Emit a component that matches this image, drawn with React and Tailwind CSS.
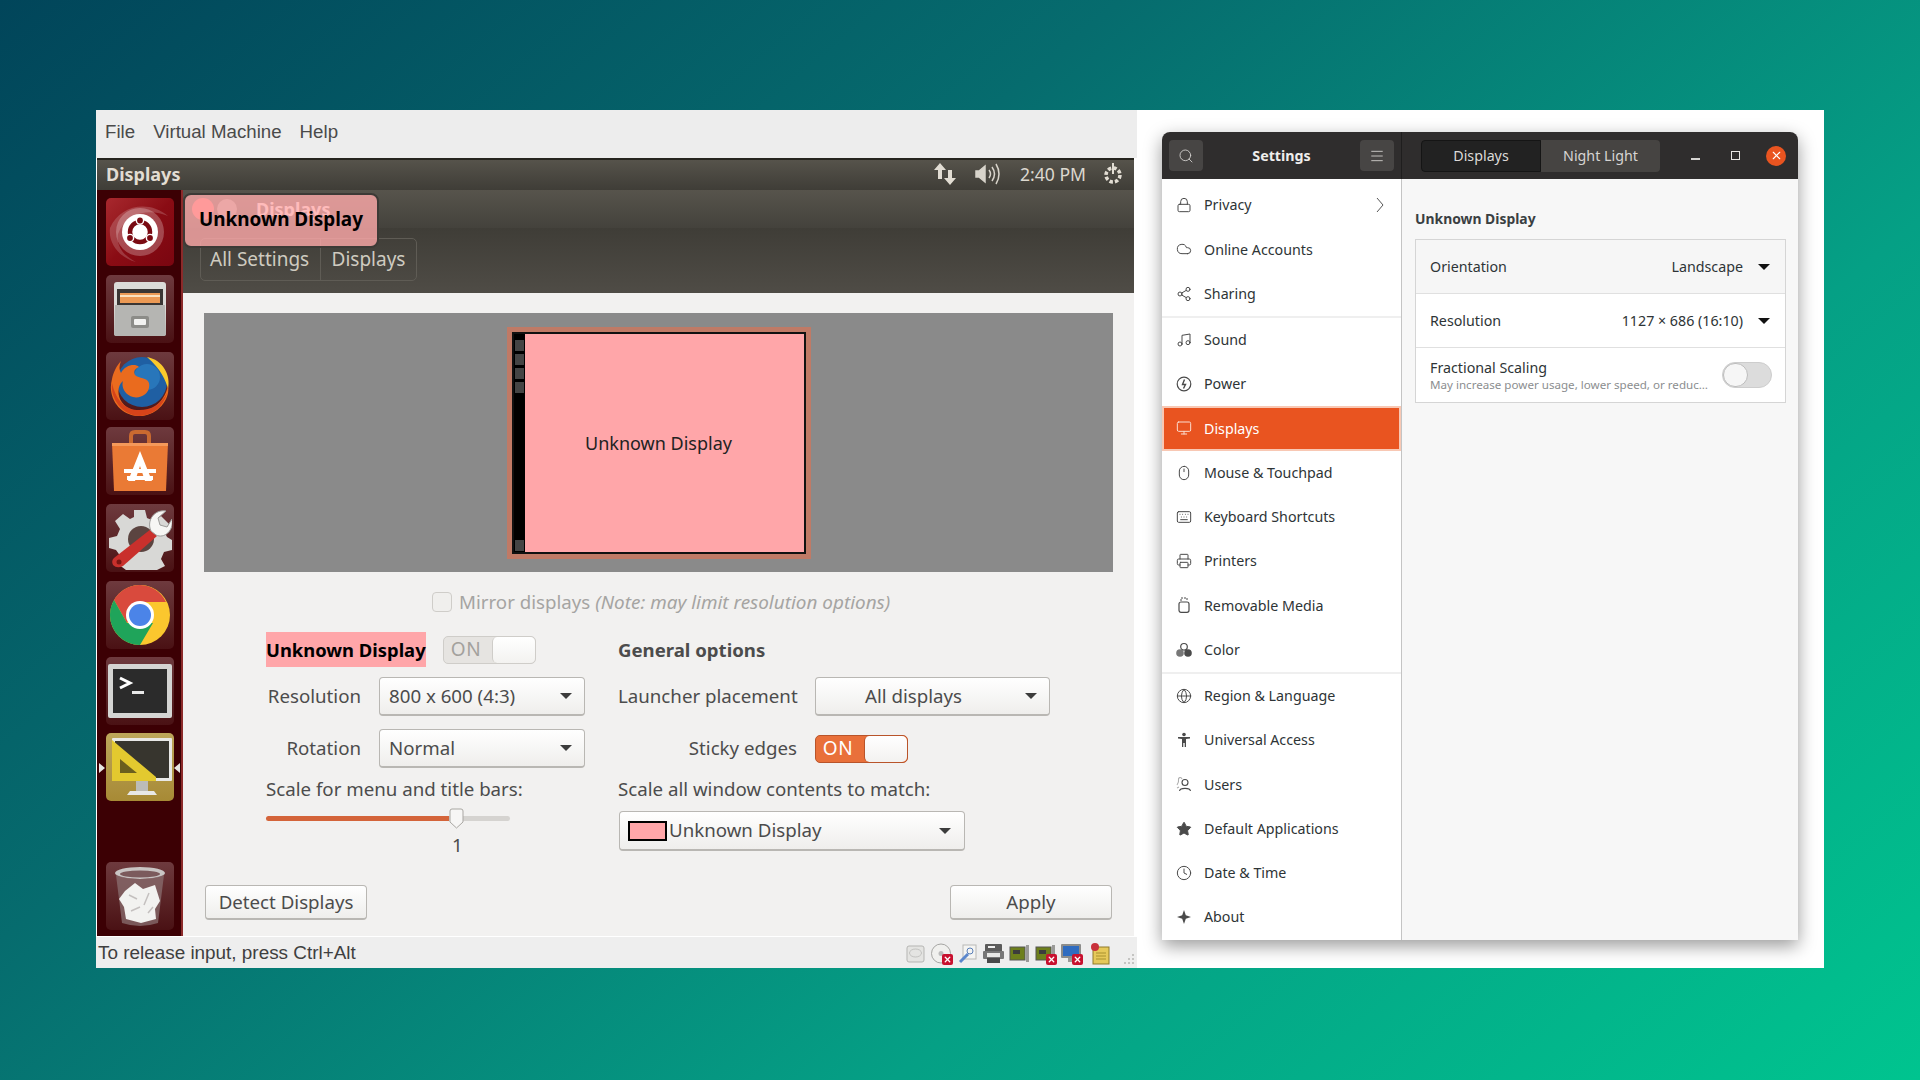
import {
  Search, Menu, Lock, Cloud, Share2, Music, Monitor, Mouse, Keyboard, Printer, Globe, Star, Clock, X,
} from "lucide-react";

const UB = "font-['Noto_Sans','Open_Sans',sans-serif]";

function Caret({ className = "" }) {
  return <span className={`w-0 h-0 border-x-[6px] border-x-transparent border-t-[6px] border-t-[#3c3c3c] ${className}`} />;
}

function Combo({ className = "", children }) {
  return (
    <div className={`h-[39px] flex items-center rounded-[4px] border border-[#b9b7b3] border-b-2 bg-gradient-to-b from-white to-[#efeeec] text-[#4c4c4c] ${className}`}>
      {children}
    </div>
  );
}

function Toggle({ on }) {
  return (
    <div className={`h-[28px] w-[93px] flex rounded-[5px] border ${on ? "border-[#b9542a] bg-[#e9703a] text-white" : "border-[#cfcdc9] bg-[#e6e4e1] text-[#a3a19d]"}`}>
      <span className="w-[48px] pr-[4px] flex items-center justify-center text-[19px] leading-none tracking-[0.5px]">ON</span>
      <span className={`flex-1 rounded-[5px] border-l ${on ? "border-[#b9542a]" : "border-[#cfcdc9]"} bg-gradient-to-b from-white to-[#f3f2f0]`} />
    </div>
  );
}

function Tile({ active, red, className = "", children }) {
  const bg = red
    ? "bg-gradient-to-br from-[#a8282e] via-[#8a0c14] to-[#7a0610]"
    : active
      ? "bg-gradient-to-b from-[#bda65a] to-[#a78a35]"
      : "bg-gradient-to-b from-[#6e3a3e] to-[#4a1114]";
  return <div className={`w-[68px] h-[68px] ml-[9px] rounded-[5px] flex items-center justify-center ${bg} ${className}`}>{children}</div>;
}

const UbuntuIcon = () => (
  <svg width="68" height="68" viewBox="0 0 68 68">
    <path d="M4 30 C14 6 44 2 62 18 C44 10 20 14 12 36 C10 48 18 58 30 64 C14 60 2 46 4 30Z" fill="#fff" opacity="0.18" />
    <circle cx="34" cy="34" r="24" fill="#fff" opacity="0.25" />
    <circle cx="34" cy="34" r="18" fill="#fff" />
    <circle cx="34" cy="34" r="10" fill="none" stroke="#7a0a12" strokeWidth="4.500" />
    <circle cx="34" cy="22.500" r="4.300" fill="#fff" />
    <circle cx="24" cy="40" r="4.300" fill="#fff" />
    <circle cx="44" cy="40" r="4.300" fill="#fff" />
    <circle cx="34" cy="22.500" r="2.900" fill="#7a0a12" />
    <circle cx="24" cy="40" r="2.900" fill="#7a0a12" />
    <circle cx="44" cy="40" r="2.900" fill="#7a0a12" />
  </svg>
);

const FilesIcon = () => (
  <svg width="58" height="58" viewBox="0 0 58 58">
    <rect x="3" y="2" width="52" height="54" rx="3" fill="#dcdbd8" />
    <rect x="6" y="9" width="46" height="17" fill="#3a3634" />
    <rect x="9" y="13" width="40" height="10" fill="#ec9a55" />
    <rect x="9" y="15" width="40" height="2" fill="#fbe2bf" />
    <path d="M4 25 H54 L55 54 Q55 56 53 56 H5 Q3 56 3 54Z" fill="#b5b5b2" />
    <rect x="20" y="36" width="18" height="12" rx="2" fill="#8c8c88" />
    <rect x="23" y="39" width="12" height="6" rx="1" fill="#f2f2f0" />
  </svg>
);

const FirefoxIcon = () => (
  <svg width="62" height="62" viewBox="0 0 62 62">
    <circle cx="33" cy="27" r="25" fill="#1f5fa3" />
    <circle cx="38" cy="22" r="13" fill="#2f86c9" opacity="0.6" />
    <path d="M38 2 C54 5 62 20 59 34 C57 26 52 14 38 2Z" fill="#f9c92c" />
    <path d="M12 6 C10 12 10 14 12 18 C16 10 26 8 30 12 C26 14 24 16 26 20 C30 24 38 22 40 28 C42 38 32 44 24 42 C16 40 12 32 14 26 C6 32 8 50 24 55 C40 60 56 48 59 30 C62 46 46 62 29 61 C10 60 -2 42 3 24 C4 18 8 10 12 6Z" fill="#ea6b1e" />
    <path d="M3 28 C1 44 14 61 31 61 C44 60 54 52 58 38 C52 50 40 56 28 55 C14 54 6 42 3 28Z" fill="#d6431a" />
  </svg>
);

const StoreIcon = () => (
  <svg width="60" height="64" viewBox="0 0 60 64">
    <path d="M21 14 V7 Q21 3 25 3 H35 Q39 3 39 7 V14" fill="none" stroke="#c96a30" strokeWidth="4" />
    <path d="M2 14 H58 L56 62 H4Z" fill="#ea7a35" />
    <rect x="2" y="14" width="56" height="3" fill="#f4995a" />
    <path d="M30 22 L42 52 H35 L30 37 L25 52 H18Z" fill="#fff" />
    <rect x="14" y="40" width="32" height="4" fill="#fff" />
    <rect x="17" y="47" width="26" height="4" fill="#fff" />
  </svg>
);

const ToolsIcon = () => (
  <svg width="64" height="64" viewBox="0 0 64 64">
    <path d="M26 4 H37 L39 12 L46 15 L53 10 L61 18 L56 25 L59 31 L64 34 V44 L56 46 L53 53 L57 60 L49 64 H18 L10 58 L13 51 L8 44 L1 42 V32 L9 30 L12 23 L7 15 L15 8 L22 13 L26 11Z" fill="#d8d8d6" />
    <circle cx="33" cy="33" r="13" fill="#5b4440" />
    <path d="M6 52 L43 23 L49 30 L15 60 Q9 63 5 59 Q3 55 6 52Z" fill="#c9302c" />
    <circle cx="11" cy="56" r="2.500" fill="#7b1512" />
    <path d="M43 25 C38 14 47 3 58 5 L50 12 L52 19 L59 21 L64 13 C66 25 56 33 48 29Z" fill="#f6f6f4" stroke="#9c9c9a" strokeWidth="1" />
  </svg>
);

const ChromeIcon = () => (
  <svg width="60" height="60" viewBox="0 0 60 60">
    <circle cx="30" cy="30" r="30" fill="#fbc72e" />
    <path d="M30 0 A30 30 0 0 0 4 15 L17 38 L30 17 H56 A30 30 0 0 0 30 0Z" fill="#d94a3d" />
    <path d="M4 15 A30 30 0 0 0 30 60 L43 38 L17 38Z" fill="#1fa45a" />
    <circle cx="30" cy="30" r="14" fill="#fff" />
    <circle cx="30" cy="30" r="11" fill="#4b84e8" />
  </svg>
);

const TermIcon = () => (
  <svg width="64" height="54" viewBox="0 0 64 54">
    <rect x="0" y="0" width="64" height="54" rx="2" fill="#d5d5d3" />
    <rect x="5" y="5" width="54" height="44" fill="#2b2b2b" />
    <path d="M12 14 L22 19 L12 24" fill="none" stroke="#fff" strokeWidth="3" />
    <rect x="24" y="27" width="12" height="3" fill="#e8e8e8" />
  </svg>
);

const DisplayIcon = () => (
  <svg width="66" height="64" viewBox="0 0 66 64">
    <rect x="5" y="3" width="60" height="43" rx="1" fill="#e8e8e6" />
    <rect x="8" y="6" width="54" height="37" fill="#37352e" />
    <path d="M23 56 H47 L50 60 H20Z" fill="#e8e8e6" />
    <rect x="29" y="46" width="12" height="10" fill="#bcbcb8" />
    <path d="M5 5 L49 42 V46 H5Z" fill="#e3c92f" />
    <path d="M13 24 L30 38 H13Z" fill="#6b5f1e" />
  </svg>
);

const TrashIcon = () => (
  <svg width="54" height="62" viewBox="0 0 54 62">
    <ellipse cx="27" cy="8" rx="25" ry="6" fill="#c9c5c4" />
    <ellipse cx="27" cy="9" rx="20" ry="3.500" fill="#7b5a5c" />
    <path d="M3 10 L9 58 Q27 64 45 58 L51 10 Q27 18 3 10Z" fill="#8a6f70" opacity="0.75" />
    <path d="M12 26 L22 18 L30 24 L42 20 L47 36 L42 44 L43 54 L28 58 L13 54 L11 42 L6 34Z" fill="#f2f2f0" />
    <path d="M16 30 L24 34 M36 28 L31 40 M18 46 L27 42 M35 48 L40 42" stroke="#c4c0bf" strokeWidth="1.500" />
  </svg>
);

function StatusIcons() {
  const Badge = () => (
    <span className="absolute -right-[1px] -bottom-[1px] w-[11px] h-[11px] rounded-[2px] bg-[#c8102e] flex items-center justify-center">
      <X size={9} color="#fff" strokeWidth={3.5} />
    </span>
  );
  const Card = ({ bad }) => (
    <span className="relative block w-[21px] h-[21px]">
      <svg width="21" height="21" viewBox="0 0 21 21">
        <rect x="1" y="4" width="15" height="13" fill="#6d7f1c" stroke="#555" />
        <rect x="4" y="7" width="7" height="4" fill="#3c3c3c" />
        <rect x="17" y="2" width="3" height="17" fill="#9a9a98" />
      </svg>
      {bad && <Badge />}
    </span>
  );
  return (
    <div className="flex items-center ml-auto mr-[27px]">
      <svg width="19" height="20" viewBox="0 0 19 20"><rect x="1" y="2" width="17" height="16" rx="2" fill="#e4e4e2" stroke="#b5b5b3" /><ellipse cx="9.500" cy="9" rx="6" ry="4" fill="none" stroke="#c2c2c0" /></svg>
      <span className="relative block w-[21px] h-[21px] ml-[6px]">
        <svg width="21" height="21" viewBox="0 0 21 21"><circle cx="10" cy="10.500" r="9.500" fill="#f0f0ee" stroke="#a5a5a3" /><circle cx="10" cy="10.500" r="2.500" fill="#bbb" /></svg>
        <Badge />
      </span>
      <svg className="ml-[6px]" width="19" height="20" viewBox="0 0 19 20"><rect x="5" y="1" width="13" height="14" fill="#f4f4f2" stroke="#b8b8b6" /><circle cx="12" cy="7" r="3" fill="none" stroke="#5a7fb8" /><path d="M2 18 L10 10" stroke="#5a86cc" strokeWidth="3" /></svg>
      <svg className="ml-[6px]" width="21" height="21" viewBox="0 0 21 21"><rect x="2" y="1" width="17" height="8" rx="1" fill="#5b5b5b" /><rect x="5" y="3" width="7" height="2" fill="#eee" /><rect x="0" y="8" width="21" height="8" rx="1" fill="#777" /><rect x="4" y="10" width="13" height="4" fill="#e8e8e6" /><rect x="4" y="15" width="13" height="5" fill="#4a4a4a" /></svg>
      <span className="ml-[5px]"><Card /></span>
      <span className="ml-[5px]"><Card bad /></span>
      <span className="relative block w-[21px] h-[21px] ml-[5px]">
        <svg width="21" height="21" viewBox="0 0 21 21"><rect x="0" y="1" width="20" height="14" rx="1" fill="#8d8d8b" /><rect x="2" y="3" width="16" height="10" fill="#2f6cc0" /><rect x="7" y="15" width="6" height="4" fill="#9a9a98" /></svg>
        <Badge />
      </span>
      <svg className="ml-[8px]" width="20" height="22" viewBox="0 0 20 22"><rect x="3" y="4" width="16" height="17" fill="#e6c95a" stroke="#8f7a2a" /><path d="M6 10 H16 M6 13 H16 M6 16 H16" stroke="#a8912f" /><circle cx="5" cy="4" r="4" fill="#c8303a" /></svg>
    </div>
  );
}

function VmWindow() {
  return (
    <div className="w-[1041px] h-[858px] flex flex-col font-['Liberation_Sans',sans-serif]">
      <div className="h-[48px] pb-[4px] bg-[#ededed] flex items-center pl-[9px] gap-[18px] text-[18.7px] text-[#4a4a4a] shrink-0">
        <span>File</span>
        <span>Virtual Machine</span>
        <span>Help</span>
      </div>
      <div className={`w-[1037px] ml-[1px] h-[779px] flex flex-col ${UB}`}>
        <div className="h-[32px] border-t-2 pb-[2px] border-[#26251f] bg-gradient-to-b from-[#56534b] to-[#3f3d37] flex items-center pl-[9px] pr-[9px] shrink-0">
          <span className="text-[#e2ddd3] text-[18px] font-bold">Displays</span>
          <svg className="ml-auto" width="22" height="24" viewBox="0 0 22 24" fill="#e2ddd3">
            <path d="M6 1 L12 8 H8 V17 H4 V8 H0Z" /><path d="M16 23 L10 16 H14 V8 H18 V16 H22Z" />
          </svg>
          <svg className="ml-[19px]" width="26" height="22" viewBox="0 0 26 22" fill="none" stroke="#d8d4cb" strokeWidth="1.500">
            <path d="M1 8 H4 L10 3 V19 L4 14 H1Z" fill="#d8d4cb" /><path d="M14 7 Q17 11 14 15" /><path d="M17 4 Q22 11 17 18" /><path d="M21 1 Q27 11 21 21" />
          </svg>
          <span className="ml-[19px] text-[#dcd8cf] text-[17.6px]">2:40 PM</span>
          <svg className="ml-[15px]" width="24" height="24" viewBox="0 0 24 24" fill="none" stroke="#e2ddd3" strokeWidth="3.500">
            <circle cx="12" cy="13" r="7" strokeDasharray="3.500 2" /><path d="M12 1 V12" strokeWidth="2" />
          </svg>
        </div>
        <div className="flex-1 flex min-h-0">
          <div className="w-[86px] shrink-0 bg-[#3c0004] border-r-2 border-[#8c2a2a] flex flex-col pt-[8px]">
            <Tile red><UbuntuIcon /></Tile>
            <Tile className="mt-[9px]"><FilesIcon /></Tile>
            <Tile className="mt-[9px]"><FirefoxIcon /></Tile>
            <Tile className="mt-[7px]"><StoreIcon /></Tile>
            <Tile className="mt-[9px]"><ToolsIcon /></Tile>
            <Tile className="mt-[9px]"><ChromeIcon /></Tile>
            <Tile className="mt-[8px]"><TermIcon /></Tile>
            <div className="relative mt-[8px]">
              <Tile active><DisplayIcon /></Tile>
              <span className="absolute left-[2px] top-[30px] w-0 h-0 border-y-[5px] border-y-transparent border-l-[6px] border-l-[#e8e6e2]" />
              <span className="absolute right-[1px] top-[30px] w-0 h-0 border-y-[5px] border-y-transparent border-r-[6px] border-r-[#e8e6e2]" />
            </div>
            <Tile className="mt-[61px]"><TrashIcon /></Tile>
          </div>
          <div className="flex-1 flex flex-col min-w-0">
            <div className="relative h-[103px] shrink-0 flex flex-col">
              <div className="h-[38px] bg-gradient-to-b from-[#57544c] to-[#44423c] flex items-center pl-[9px]">
                <span className="w-[22px] h-[22px] rounded-full bg-[#ff5a5a]" />
                <span className="ml-[3px] w-[20px] h-[20px] rounded-full bg-[#a09c94]" />
                <span className="ml-[19px] text-white text-[18px] font-bold">Displays</span>
              </div>
              <div className="flex-1 bg-gradient-to-b from-[#3f3d37] to-[#4f4c46] pl-[17px] pt-[10px]">
                <div className="inline-flex h-[43px] rounded-[5px] border border-[#5f5c55] text-[#cfcbc0] text-[19px]">
                  <span className="w-[120px] pl-[9px] flex items-center border-r border-[#5f5c55]">All Settings</span>
                  <span className="w-[95px] flex items-center justify-center">Displays</span>
                </div>
              </div>
              <div className="absolute left-0 top-[3px] w-[196px] h-[55px] pb-[2px] rounded-[8px] border-2 border-[#3d3a36] bg-[#ffaaaa]/80 flex items-center justify-center text-[18.9px] font-bold text-black">
                Unknown Display
              </div>
            </div>
            <div className="flex-1 bg-[#f2f1f0] flex flex-col pt-[20px] min-h-0 text-[18.7px] text-[#4c4c4c]">
              <div className="mx-[21px] h-[259px] bg-[#8a8a8a] flex items-center shrink-0">
                <div className="ml-[303px] w-[304px] h-[232px] bg-[#c07a66] p-[5px] flex">
                  <div className="flex-1 border-2 border-[#111] flex">
                    <div className="w-[11px] bg-black flex flex-col pt-[6px] gap-[3px] shrink-0 pl-[1px]">
                      <span className="w-[9px] h-[11px] bg-[#444]" />
                      <span className="w-[9px] h-[11px] bg-[#444]" />
                      <span className="w-[9px] h-[11px] bg-[#444]" />
                      <span className="w-[9px] h-[11px] bg-[#444]" />
                      <span className="w-[9px] h-[11px] bg-[#444] mt-auto mb-[1px]" />
                    </div>
                    <div className="flex-1 bg-[#ffa6a9] flex items-center justify-center pr-[12px] pt-[2px] text-[18px] text-[#222]">Unknown Display</div>
                  </div>
                </div>
              </div>
              <div className="ml-[249px] mt-[20px] h-[20px] flex items-center text-[#a5a4a2]">
                <span className="w-[20px] h-[20px] rounded-[4px] border border-[#cfcdc9] bg-[#f0efed]" />
                <span className="ml-[7px]">Mirror displays</span>
                <span className="ml-[5px] italic text-[18.9px]">(Note: may limit resolution options)</span>
              </div>
              <div className="ml-[83px] mt-[20px] flex">
                <div className="w-[352px] shrink-0">
                  <div className="h-[35px] flex items-center">
                    <span className="h-[35px] w-[160px] pt-[1px] bg-[#ffa6a9] flex items-center text-black font-bold text-[18.4px] whitespace-nowrap">Unknown Display</span>
                    <span className="ml-[17px]"><Toggle /></span>
                  </div>
                  <div className="mt-[10px] flex items-center gap-[18px]">
                    <span className="w-[95px] text-right whitespace-nowrap">Resolution</span>
                    <Combo className="w-[206px] pl-[9px] pr-[12px] justify-between">800 x 600 (4:3)<Caret /></Combo>
                  </div>
                  <div className="mt-[13px] flex items-center gap-[18px]">
                    <span className="w-[95px] text-right">Rotation</span>
                    <Combo className="w-[206px] pl-[9px] pr-[12px] justify-between">Normal<Caret /></Combo>
                  </div>
                  <div className="mt-[9px] h-[24px] flex items-center whitespace-nowrap">Scale for menu and title bars:</div>
                  <div className="relative mt-[7px] w-[244px] h-[21px] flex items-center">
                    <span className="w-[183px] h-[5px] rounded-l-full bg-[#d4643a]" />
                    <span className="flex-1 h-[5px] rounded-r-full bg-[#d5d3d0]" />
                    <svg className="absolute left-[183px] top-0" width="15" height="21" viewBox="0 0 15 21">
                      <path d="M1 3 Q1 1 3 1 H12 Q14 1 14 3 V14 L7.500 20 L1 14Z" fill="#f7f6f5" stroke="#a9a7a3" />
                    </svg>
                  </div>
                  <div className="w-[380px] pl-[186px] h-[24px] mt-[4px] flex items-center">1</div>
                </div>
                <div className="flex-1 min-w-0">
                  <div className="h-[35px] pt-[1px] flex items-center font-bold text-[18.6px]">General options</div>
                  <div className="mt-[10px] flex items-center gap-[18px]">
                    <span className="w-[179px] text-right whitespace-nowrap">Launcher placement</span>
                    <Combo className="w-[235px] pr-[12px]">
                      <span className="flex-1 text-center pr-[14px]">All displays</span><Caret />
                    </Combo>
                  </div>
                  <div className="mt-[13px] flex items-center gap-[18px] h-[39px]">
                    <span className="w-[179px] text-right">Sticky edges</span>
                    <Toggle on />
                  </div>
                  <div className="mt-[9px] h-[24px] flex items-center whitespace-nowrap">Scale all window contents to match:</div>
                  <Combo className="mt-[10px] ml-[1px] w-[346px] h-[40px] pl-[8px] pr-[13px]">
                    <span className="w-[39px] h-[20px] bg-[#ffa6a9] border-2 border-black shrink-0" />
                    <span className="ml-[2px] flex-1">Unknown Display</span>
                    <Caret />
                  </Combo>
                </div>
              </div>
              <div className="mt-auto mb-[16px] mx-[22px] flex justify-between">
                <button className="w-[162px] h-[35px] rounded-[4px] border border-[#b9b7b3] border-b-2 bg-gradient-to-b from-white to-[#efeeec]">Detect Displays</button>
                <button className="w-[162px] h-[35px] rounded-[4px] border border-[#b9b7b3] border-b-2 bg-gradient-to-b from-white to-[#efeeec]">Apply</button>
              </div>
            </div>
          </div>
        </div>
      </div>
      <div className="h-[31px] mt-[1px] pt-[2px] bg-[#eeeeee] flex items-center pl-[2px] text-[18.9px] text-[#3f3f3f] relative shrink-0">
        To release input, press Ctrl+Alt
        <StatusIcons />
        <svg className="absolute right-[2px] bottom-[2px]" width="14" height="14" viewBox="0 0 14 14" fill="#c4c4c2">
          <rect x="11" y="2" width="2" height="2" /><rect x="11" y="6" width="2" height="2" /><rect x="7" y="6" width="2" height="2" /><rect x="11" y="10" width="2" height="2" /><rect x="7" y="10" width="2" height="2" /><rect x="3" y="10" width="2" height="2" />
        </svg>
      </div>
    </div>
  );
}

const PowerIcon = (p) => (
  <svg viewBox="0 0 16 16" width="16" height="16" className={p.className} fill="none" stroke="currentColor" strokeWidth="1.200">
    <circle cx="8" cy="8" r="6.800" /><path d="M8.500 3.500 L6.500 8.500 H9.500 L7.500 12.500" strokeWidth="1.400" />
  </svg>
);
const UsbIcon = (p) => (
  <svg viewBox="0 0 16 16" width="16" height="16" className={p.className} fill="none" stroke="currentColor" strokeWidth="1.200">
    <rect x="3" y="5" width="10" height="10.300" rx="2" /><path d="M5 4 V1 H11 V4" strokeWidth="1" strokeDasharray="2 1" />
  </svg>
);
const ColorIcon = (p) => (
  <svg viewBox="0 0 16 16" width="16" height="16" className={p.className} fill="currentColor">
    <circle cx="8" cy="4.800" r="3.300" fill="none" stroke="currentColor" strokeWidth="1.200" /><circle cx="4" cy="11" r="3.800" opacity="0.75" /><circle cx="12" cy="11" r="3.800" />
  </svg>
);
const AccessIcon = (p) => (
  <svg viewBox="0 0 16 16" width="16" height="16" className={p.className} fill="currentColor">
    <circle cx="8" cy="2.500" r="1.800" /><path d="M2 5 H14 V6.500 L10 7 V15 H8.700 V11 H7.300 V15 H6 V7 L2 6.500Z" />
  </svg>
);
const UsersIcon = (p) => (
  <svg viewBox="0 0 16 16" width="16" height="16" className={p.className} fill="none" stroke="currentColor" strokeWidth="1.100">
    <circle cx="9" cy="6.500" r="3" /><path d="M3.500 15 C4 11.500 14 11.500 14.500 15" /><path d="M6 3 C5 0.500 2 1.500 2.500 4 C3 6 2.500 7 1 9 M1 12 L3 11" opacity="0.45" />
  </svg>
);
const AboutIcon = (p) => (
  <svg viewBox="0 0 16 16" width="16" height="16" className={p.className} fill="currentColor"><path d="M8 1 L9.800 6.200 L15 8 L9.800 9.800 L8 15 L6.200 9.800 L1 8 L6.200 6.200Z" /></svg>
);

const GROUPS = [
  [
    { name: "Privacy", icon: Lock, arrow: true },
    { name: "Online Accounts", icon: Cloud },
    { name: "Sharing", icon: Share2 },
  ],
  [
    { name: "Sound", icon: Music },
    { name: "Power", icon: PowerIcon },
    { name: "Displays", icon: Monitor, active: true },
    { name: "Mouse & Touchpad", icon: Mouse },
    { name: "Keyboard Shortcuts", icon: Keyboard },
    { name: "Printers", icon: Printer },
    { name: "Removable Media", icon: UsbIcon },
    { name: "Color", icon: ColorIcon },
  ],
  [
    { name: "Region & Language", icon: Globe },
    { name: "Universal Access", icon: AccessIcon },
    { name: "Users", icon: UsersIcon },
    { name: "Default Applications", icon: Star, filled: true },
    { name: "Date & Time", icon: Clock },
    { name: "About", icon: AboutIcon },
  ],
];

function SidebarRow({ item }) {
  const Icon = item.icon;
  return (
    <div className={`h-[44.25px] flex items-center pr-[14px] ${item.active ? "pl-[12px] bg-[#e95420] text-white border-2 border-[#f8c8b4]" : "pl-[14px] text-[#2e3436]"}`}>
      <Icon
        size={16}
        strokeWidth={1.5}
        fill={item.filled ? "currentColor" : "none"}
        className={item.active ? "text-[#fbdccf]" : "text-[#4a4a4a]"}
      />
      <span className="ml-[12px]">{item.name}</span>
      {item.arrow && (
        <svg className="ml-auto mr-[3px]" width="8" height="16" viewBox="0 0 8 16" fill="none" stroke="#555" strokeWidth="1">
          <path d="M1 1 L7 8 L1 15" />
        </svg>
      )}
    </div>
  );
}

function SettingsWindow() {
  return (
    <div className={`ml-[25px] mt-[22px] w-[636px] h-[808px] rounded-t-[8px] flex flex-col overflow-hidden shadow-[0_6px_18px_rgba(0,0,0,0.4)] text-[14.25px] ${UB}`}>
      <div className="h-[47px] bg-[#2f2d2d] flex shrink-0 items-center text-white">
        <div className="w-[240px] h-full flex items-center px-[7px] border-r border-[#1f1e1e]">
          <span className="w-[34px] h-[31px] rounded-[4px] bg-[#474544] flex items-center justify-center"><Search size={16} strokeWidth={1.300} color="#d6d4d2" /></span>
          <span className="flex-1 text-center font-bold text-[#efeeec]">Settings</span>
          <span className="w-[34px] h-[31px] rounded-[4px] bg-[#474544] flex items-center justify-center"><Menu size={16} strokeWidth={1.300} color="#d6d4d2" /></span>
        </div>
        <div className="ml-[19px] flex h-[32px]">
          <span className="w-[120px] rounded-l-[4px] border border-[#151515] bg-[#222222] flex items-center justify-center text-[#dcdad8]">Displays</span>
          <span className="w-[119px] rounded-r-[4px] bg-[#464442] flex items-center justify-center text-[#d6d4d2]">Night Light</span>
        </div>
        <span className="ml-[31px] w-[9px] h-[2px] mt-[7px] bg-[#d6d4d2]" />
        <span className="ml-[31px] w-[9px] h-[9px] border border-[#e8e6e4]" />
        <span className="ml-[26px] w-[20px] h-[20px] rounded-full bg-[#e95420] flex items-center justify-center"><X size={13} strokeWidth={2} color="#fff" /></span>
      </div>
      <div className="flex-1 flex min-h-0">
        <div className="w-[240px] bg-white border-r border-[#c4c4c4] shrink-0 pt-[4px]">
          {GROUPS.map((g, i) => (
            <div key={i} className={i < 2 ? "border-b-2 border-[#efefef]" : ""}>
              {g.map((it) => <SidebarRow key={it.name} item={it} />)}
            </div>
          ))}
        </div>
        <div className="flex-1 bg-[#f7f7f7] pl-[13px] pr-[12px] pt-[29px] text-[#2e3436]">
          <div className="h-[22px] flex items-center font-bold text-[13.9px] text-[#3a3f42]">Unknown Display</div>
          <div className="mt-[9px] border border-[#d5d5d5] flex flex-col h-[164px]">
            <div className="h-[54px] flex items-center px-[14px] bg-[#f6f6f6] border-b border-[#e0e0e0]">
              Orientation
              <span className="ml-auto">Landscape</span>
              <Caret className="ml-[15px] mr-[1px] border-x-[5px] border-t-[5px] border-t-[#111]" />
            </div>
            <div className="h-[54px] flex items-center px-[14px] bg-white border-b border-[#e0e0e0]">
              Resolution
              <span className="ml-auto">1127 × 686 (16:10)</span>
              <Caret className="ml-[15px] mr-[1px] border-x-[5px] border-t-[5px] border-t-[#111]" />
            </div>
            <div className="flex-1 flex items-center pl-[14px] pr-[13px] bg-white">
              <div className="flex flex-col">
                <span className="leading-[20px]">Fractional Scaling</span>
                <span className="text-[11.6px] leading-[14px] text-[#8b8e8f] whitespace-nowrap">May increase power usage, lower speed, or reduc…</span>
              </div>
              <span className="ml-auto w-[50px] h-[26px] rounded-full bg-[#dcdcdc] border border-[#cdcdcd] flex">
                <span className="w-[25px] h-[24px] rounded-full bg-[#f6f6f6] border border-[#bdbdbd]" />
              </span>
            </div>
          </div>
        </div>
      </div>
    </div>
  );
}

export default function App() {
  return (
    <div className="w-[1920px] h-[1080px] overflow-hidden pt-[110px] pl-[96px] bg-[linear-gradient(140deg,#01455a_0%,#066c6e_35%,#05a085_68%,#00c48f_100%)]">
      <div className="w-[1728px] h-[858px] bg-white flex">
        <VmWindow />
        <SettingsWindow />
      </div>
    </div>
  );
}
